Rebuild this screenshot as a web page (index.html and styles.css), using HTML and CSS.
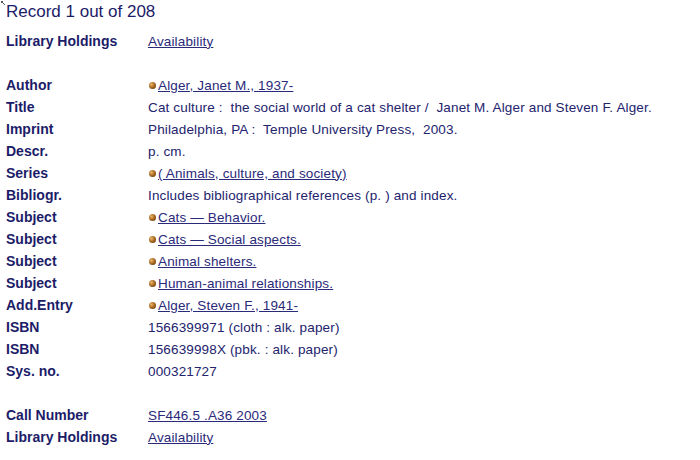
FILE: index.html
```html
<!DOCTYPE html>
<html>
<head>
<meta charset="utf-8">
<link rel="stylesheet" href="styles.css">
</head>
<body>
<svg class="mark" width="8" height="8" viewBox="0 0 8 8"><path d="M1 1 L5 5 M3 1 L1 3" stroke="#555" stroke-width="1" fill="none"/></svg>
<div class="page">
  <h1 class="heading">Record 1 out of 208</h1>
  <div class="rec">
    <div class="lbl">Library Holdings</div><div class="val"><a href="#">Availability</a></div>
    <div class="gap"></div>
    <div class="lbl">Author</div><div class="val"><span class="dot"></span><a href="#">Alger, Janet M., 1937-</a></div>
    <div class="lbl">Title</div><div class="val">Cat culture :&nbsp; the social world of a cat shelter /&nbsp; Janet M. Alger and Steven F. Alger.</div>
    <div class="lbl">Imprint</div><div class="val">Philadelphia, PA :&nbsp; Temple University Press,&nbsp; 2003.</div>
    <div class="lbl">Descr.</div><div class="val">p. cm.</div>
    <div class="lbl">Series</div><div class="val"><span class="dot"></span><a href="#">( Animals, culture, and society)</a></div>
    <div class="lbl">Bibliogr.</div><div class="val">Includes bibliographical references (p. ) and index.</div>
    <div class="lbl">Subject</div><div class="val"><span class="dot"></span><a href="#">Cats — Behavior.</a></div>
    <div class="lbl">Subject</div><div class="val"><span class="dot"></span><a href="#">Cats — Social aspects.</a></div>
    <div class="lbl">Subject</div><div class="val"><span class="dot"></span><a href="#">Animal shelters.</a></div>
    <div class="lbl">Subject</div><div class="val"><span class="dot"></span><a href="#">Human-animal relationships.</a></div>
    <div class="lbl">Add.Entry</div><div class="val"><span class="dot"></span><a href="#">Alger, Steven F., 1941-</a></div>
    <div class="lbl">ISBN</div><div class="val">1566399971 (cloth : alk. paper)</div>
    <div class="lbl">ISBN</div><div class="val">156639998X (pbk. : alk. paper)</div>
    <div class="lbl">Sys. no.</div><div class="val">000321727</div>
    <div class="gap"></div>
    <div class="lbl">Call Number</div><div class="val"><a href="#">SF446.5 .A36 2003</a></div>
    <div class="lbl">Library Holdings</div><div class="val"><a href="#">Availability</a></div>
  </div>
</div>
</body>
</html>
```
FILE: styles.css
```css
html, body {
  margin: 0;
  padding: 0;
  background: #ffffff;
}
body {
  font-family: "Liberation Sans", Arial, sans-serif;
  color: #23236e;
}
.mark {
  position: absolute;
  left: 0;
  top: 0;
}
.page {
  padding: 2px 0 0 6px;
}
.heading {
  margin: 0;
  font-size: 17px;
  font-weight: normal;
  line-height: 20px;
  color: #1c1c68;
}
.rec {
  display: grid;
  grid-template-columns: 142px auto;
  grid-auto-rows: 22px;
  align-items: center;
  margin-top: 8px;
}
.gap {
  grid-column: 1 / span 2;
}
.lbl {
  font-weight: bold;
  font-size: 14px;
  color: #1c1c68;
}
.val {
  font-size: 13.5px;
  letter-spacing: 0.15px;
  display: flex;
  align-items: center;
  white-space: nowrap;
}
.val a {
  color: #2a2a7a;
  text-decoration: underline;
}
.dot {
  display: inline-block;
  width: 7px;
  height: 7px;
  border-radius: 50%;
  margin: 0 2px 0 1px;
  background: radial-gradient(circle at 35% 35%, #e8b868 0%, #a0601a 55%, #4a2806 100%);
}
```
